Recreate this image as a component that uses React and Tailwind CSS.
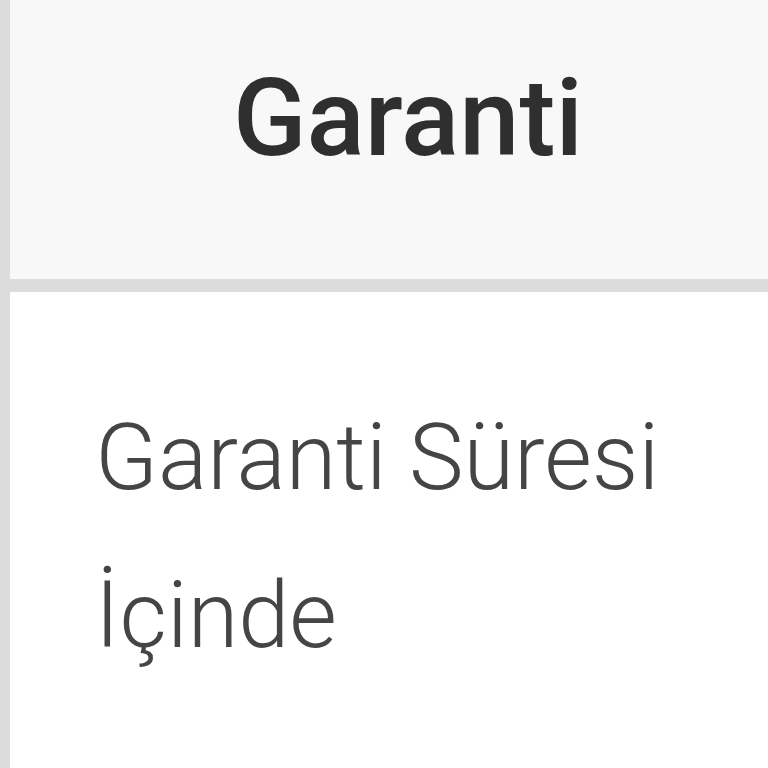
export default function App() {
  return (
    <div className="w-[768px] h-[768px] overflow-hidden bg-white font-['Roboto',sans-serif]">
      <div className="w-[806px] h-full border-l-[10px] border-[#dcdcdc] flex flex-col">
        {/* header cell */}
        <div className="h-[279px] bg-[#f8f8f8] pt-[64px] text-center">
          <span className="text-[108px] leading-none font-medium text-[#2f2f2f]">Garanti</span>
        </div>
        <div className="h-[13px] bg-[#dcdcdc]" />
        {/* body cell */}
        <div className="flex-1 bg-white pt-[87px] pl-[85px] pr-[60px]">
          <p className="text-[92px] leading-[158px] font-light text-[#454545] w-[620px]">
            Garanti Süresi İçinde
          </p>
        </div>
      </div>
    </div>
  );
}
